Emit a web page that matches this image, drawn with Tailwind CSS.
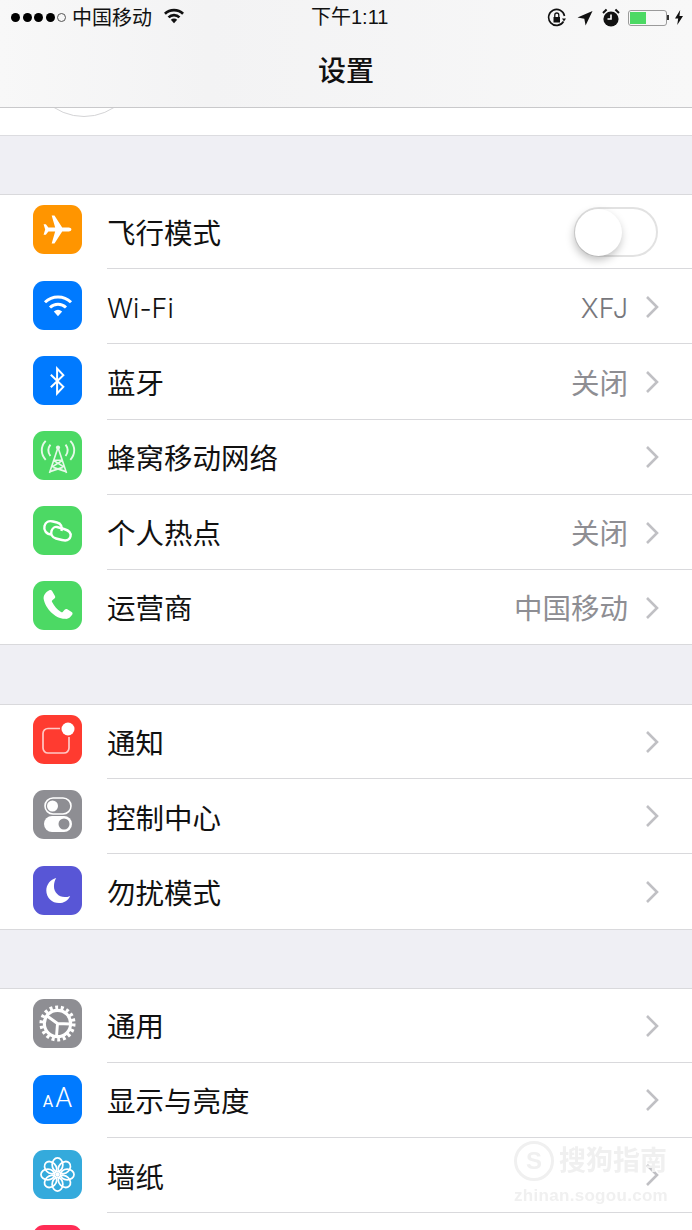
<!DOCTYPE html>
<html lang="zh">
<head>
  <meta charset="UTF-8" />
  <title>设置</title>
  <script src="https://cdn.jsdelivr.net/npm/@tailwindcss/browser@4"></script>
</head>
<body class="bg-[#efeff4]">
<div class="relative h-[1230px] w-[692px] overflow-hidden bg-[#efeff4] font-['Liberation_Sans','Noto_Sans_CJK_SC',sans-serif] text-[#111]">

  <!-- status + nav -->
  <header class="h-[108px] border-b border-[#c9c9cb] bg-gradient-to-r from-[#f8f8f8] via-[#f3f3f4] via-30% to-[#f8f8f8]">
    <div class="relative flex h-[35px] items-center pl-[11px] pr-[9px] text-[20px] leading-none">
      <div class="flex items-center gap-[2.5px]">
        <span class="h-[9px] w-[9px] rounded-full bg-black"></span>
        <span class="h-[9px] w-[9px] rounded-full bg-black"></span>
        <span class="h-[9px] w-[9px] rounded-full bg-black"></span>
        <span class="h-[9px] w-[9px] rounded-full bg-black"></span>
        <span class="h-[9px] w-[9px] rounded-full border border-[#555]"></span>
      </div>
      <span class="ml-[6px]">中国移动</span>
      <svg class="ml-[12px] mb-[3px]" width="20" height="16" viewBox="0 0 22 17" fill="none" stroke="#111" stroke-width="3">
        <path d="M1 6a14.5 14.5 0 0 1 20 0" />
        <path d="M5 10a8.6 8.6 0 0 1 12 0" />
        <path d="M7.5 12.6 11 16.500l3.500-3.900a5 5 0 0 0-7 0z" fill="#111" stroke="none" />
      </svg>
      <span class="absolute left-[311px] top-[7px] text-[20px]">下午1:11</span>
      <div class="ml-auto flex items-center">
        <svg width="20" height="20" viewBox="0 0 20 20" fill="none" stroke="#111" stroke-width="1.6">
          <path d="M16.500 13.500A8 8 0 1 1 17.500 8" />
          <path d="M15 10.500h4l-2 3z" fill="#111" stroke="none" />
          <rect x="6.500" y="9" width="6.500" height="5.500" fill="#111" stroke="none" />
          <path d="M7.800 9V7a2 2 0 0 1 4 0v2" stroke-width="1.3" />
        </svg>
        <svg class="ml-[10px]" width="16" height="16" viewBox="0 0 16 16"><path d="M15.500 1 .5 7.400l6.800 1.300L8.600 15.500z" fill="#111" /></svg>
        <svg class="ml-[9px]" width="18" height="19" viewBox="0 0 18 19">
          <circle cx="9" cy="11" r="7.600" fill="#111" />
          <path d="M9 6.500V11H5.500" fill="none" stroke="#fff" stroke-width="1.6" />
          <path d="M1 5 4.600 1.600M17 5l-3.600-3.400" stroke="#111" stroke-width="2" />
        </svg>
        <div class="ml-[8px] h-[16px] w-[39px] rounded-[3px] border border-[#9a9a9a] p-px">
          <div class="h-full w-[16px] bg-[#4cd964]"></div>
        </div>
        <div class="h-[5px] w-[2px] bg-[#333]"></div>
        <svg class="ml-[6px]" width="8" height="15" viewBox="0 0 10 17" preserveAspectRatio="none"><path d="M6.500 0 0 9.500h4L2.800 17 10 6.800H5.600z" fill="#111" /></svg>
      </div>
    </div>
    <h1 class="mt-[18px] text-center text-[28px] font-medium leading-[38px]">设置</h1>
  </header>

  <div class="relative h-[28px] overflow-hidden border-b border-[#dcdce0] bg-white">
    <div class="absolute left-[29px] top-[-101px] h-[110px] w-[110px] rounded-full border border-[#d4d4d6]"></div>
  </div>

  <div class="h-[58px]"></div>

  <section class="border-y border-[#d9d9dc] bg-white">
    <div class="flex h-[74px] items-center pl-[33px]">
      <div class="mb-[5px] flex h-[49px] w-[49px] shrink-0 items-center justify-center rounded-[11px] bg-[#ff9500]">
        <svg width="33" height="33" viewBox="0 0 38 38"><path d="M35 19c0-1.400-1.600-2.200-3-2.200h-7.600L15.500 3h-3.200l4 13.800H8.500L5.600 13H3l1.800 6L3 25h2.600l2.900-3.800h7.800l-4 13.800h3.200l8.900-13.800H32c1.400 0 3-.8 3-2.200z" fill="#fff" /></svg>
      </div>
      <div class="ml-[25px] flex h-full min-w-0 flex-1 items-center border-b border-[#d9d9dc] pr-[34px] text-[28.5px]">
        <span class="pt-[5px]">飞行模式</span>
        <div class="relative ml-auto h-[50px] w-[84px] rounded-full border-2 border-[#e2e2e2]">
          <div class="absolute left-[-1px] top-0 h-[47px] w-[47px] rounded-full bg-white shadow-[-1px_4px_9px_rgba(0,0,0,0.25)]"></div>
        </div>
      </div>
    </div>
    <div class="flex h-[75px] items-center pl-[33px]">
      <div class="mb-[2px] flex h-[49px] w-[49px] shrink-0 items-center justify-center rounded-[11px] bg-[#007aff]">
        <svg width="32" height="26" viewBox="0 0 34 28" fill="none" stroke="#fff" stroke-width="3.2">
          <path d="M3 10a20 20 0 0 1 28 0" />
          <path d="M8.400 15.600a12.400 12.400 0 0 1 17.200 0" />
          <path d="M12.500 20 17 25l4.500-5a7 7 0 0 0-9 0z" fill="#fff" stroke="none" />
        </svg>
      </div>
      <div class="ml-[25px] flex h-full min-w-0 flex-1 items-center border-b border-[#d9d9dc] pr-[33px] text-[28.5px]">
        <span class="pt-[6px] font-['Inter'] text-[27px] font-light">Wi-Fi</span>
        <span class="ml-auto pt-[6px] font-['Inter'] text-[27px] font-light text-[#77777c]">XFJ</span>
        <svg class="ml-[17px] mt-px" width="14" height="24" viewBox="0 0 14 24" fill="none" stroke="#c0c0c4" stroke-width="2.6"><path d="m2 2 10 10L2 22" /></svg>
      </div>
    </div>
    <div class="flex h-[76px] items-center pl-[33px]">
      <div class="mb-[3px] flex h-[49px] w-[49px] shrink-0 items-center justify-center rounded-[11px] bg-[#007aff]">
        <svg width="19" height="30" viewBox="0 0 22 36" fill="none" stroke="#fff" stroke-width="2.4"><path d="M3 10.500 18 25 10.500 33V3L18 11 3 25.500" /></svg>
      </div>
      <div class="ml-[25px] flex h-full min-w-0 flex-1 items-center border-b border-[#d9d9dc] pr-[33px] text-[28.5px]">
        <span class="pt-[5px]">蓝牙</span>
        <span class="ml-auto pt-[5px] text-[#8e8e93]">关闭</span>
        <svg class="ml-[17px]" width="14" height="24" viewBox="0 0 14 24" fill="none" stroke="#c0c0c4" stroke-width="2.6"><path d="m2 2 10 10L2 22" /></svg>
      </div>
    </div>
    <div class="flex h-[75px] items-center pl-[33px]">
      <div class="mb-[4px] flex h-[49px] w-[49px] shrink-0 items-center justify-center rounded-[11px] bg-[#4cd964]">
        <svg width="38" height="36" viewBox="0 0 40 38" fill="none" stroke="#e6f9e9" stroke-width="2">
          <path d="M7 3C1.500 9 1.500 17 7 23M33 3c5.500 6 5.500 14 0 20" />
          <path d="M12 7c-3 4-3 8 0 12M28 7c3 4 3 8 0 12" />
          <circle cx="20" cy="10" r="2.200" fill="#e6f9e9" stroke="none" />
          <path d="M20 10 11 37M20 10l9 27M15.500 23.500h9M13 31l12-7.500M27 31l-12-7.500M11.500 35.500 25 31M28.500 35.500 15 31" stroke-width="1.700" />
        </svg>
      </div>
      <div class="ml-[25px] flex h-full min-w-0 flex-1 items-center border-b border-[#d9d9dc] pr-[33px] text-[28.5px]">
        <span class="pt-[5px]">蜂窝移动网络</span>
        <svg class="ml-auto" width="14" height="24" viewBox="0 0 14 24" fill="none" stroke="#c0c0c4" stroke-width="2.6"><path d="m2 2 10 10L2 22" /></svg>
      </div>
    </div>
    <div class="flex h-[75px] items-center pl-[33px]">
      <div class="relative mb-[4px] h-[49px] w-[49px] shrink-0 rounded-[11px] bg-[#4cd964]">
        <svg class="absolute left-0 top-0" width="49" height="49" viewBox="0 0 49 49" fill="none" stroke="#fff" stroke-width="2.4">
          <path d="M19 28.500C13 28.500 10.500 24 11.500 20 12.500 16 16 14.500 20 15.500L24 16.500C28 17.500 29.500 21 28.500 25" />
          <path d="M24 21 31 23C36 24.500 38.500 27 37.500 30.500 36.500 34 33 35 29 34L23 32.500C19 31.500 17.500 28 18.500 25 19.500 22 22 20.500 24 21" />
        </svg>
      </div>
      <div class="ml-[25px] flex h-full min-w-0 flex-1 items-center border-b border-[#d9d9dc] pr-[33px] text-[28.5px]">
        <span class="pt-[5px]">个人热点</span>
        <span class="ml-auto pt-[5px] text-[#8e8e93]">关闭</span>
        <svg class="ml-[17px] mt-px" width="14" height="24" viewBox="0 0 14 24" fill="none" stroke="#c0c0c4" stroke-width="2.6"><path d="m2 2 10 10L2 22" /></svg>
      </div>
    </div>
    <div class="flex h-[74px] items-center pl-[33px]">
      <div class="mb-[3px] flex h-[49px] w-[49px] shrink-0 items-center justify-center rounded-[11px] bg-[#4cd964]">
        <svg width="32" height="33" viewBox="0 0 36 38"><path d="M8 1.500c1.500-.8 2.500-.3 3.200.8l3.300 5.700c.6 1.200.3 2.200-.6 3l-2.400 2c-.7.600-.7 1.200-.3 2 2.700 5 5.700 8.500 10.300 11.500.8.500 1.500.4 2.100-.3l2-2.300c.9-1 2-1.200 3.100-.5l5 3.200c1.200.8 1.400 1.900.6 3.100-2 3-4.800 5.300-8.300 4.600C14 34 3.500 22 1.500 11.500.9 7.500 4 3.500 8 1.500z" fill="#fff" /></svg>
      </div>
      <div class="ml-[25px] flex h-full min-w-0 flex-1 items-center pr-[33px] text-[28.5px]">
        <span class="pt-[5px]">运营商</span>
        <span class="ml-auto pt-[5px] text-[#8e8e93]">中国移动</span>
        <svg class="ml-[17px] mt-px" width="14" height="24" viewBox="0 0 14 24" fill="none" stroke="#c0c0c4" stroke-width="2.6"><path d="m2 2 10 10L2 22" /></svg>
      </div>
    </div>
  </section>

  <div class="h-[59px]"></div>

  <section class="border-y border-[#d9d9dc] bg-white">
    <div class="flex h-[74px] items-center pl-[33px]">
      <div class="relative mb-[5px] h-[49px] w-[49px] shrink-0 rounded-[11px] bg-[#ff3b30]">
        <svg class="absolute left-0 top-0" width="49" height="49" viewBox="0 0 49 49" fill="none">
          <path d="M27 13.500H15a5 5 0 0 0-5 5V33a5 5 0 0 0 5 5h16a5 5 0 0 0 5-5V22" stroke="#ffc9c5" stroke-width="1.700" />
          <circle cx="35" cy="14" r="6.500" fill="#fff" />
        </svg>
      </div>
      <div class="ml-[25px] flex h-full min-w-0 flex-1 items-center border-b border-[#d9d9dc] pr-[33px] text-[28.5px]">
        <span class="pt-[5px]">通知</span>
        <svg class="ml-auto" width="14" height="24" viewBox="0 0 14 24" fill="none" stroke="#c0c0c4" stroke-width="2.6"><path d="m2 2 10 10L2 22" /></svg>
      </div>
    </div>
    <div class="flex h-[75px] items-center pl-[33px]">
      <div class="mb-[4px] flex h-[49px] w-[49px] shrink-0 items-center justify-center rounded-[11px] bg-[#8e8e93]">
        <svg width="30" height="36" viewBox="0 0 30 36">
          <rect x="2" y="1" width="26" height="16" rx="8" fill="none" stroke="#fff" stroke-width="1.600" />
          <circle cx="9.500" cy="9" r="5.500" fill="#fff" />
          <rect x="1" y="19" width="28" height="16" rx="8" fill="#fff" />
          <circle cx="21" cy="27" r="5.500" fill="#8e8e93" />
        </svg>
      </div>
      <div class="ml-[25px] flex h-full min-w-0 flex-1 items-center border-b border-[#d9d9dc] pr-[33px] text-[28.5px]">
        <span class="pt-[6px]">控制中心</span>
        <svg class="ml-auto" width="14" height="24" viewBox="0 0 14 24" fill="none" stroke="#c0c0c4" stroke-width="2.6"><path d="m2 2 10 10L2 22" /></svg>
      </div>
    </div>
    <div class="flex h-[75px] items-center pl-[33px]">
      <div class="mb-[2px] flex h-[49px] w-[49px] shrink-0 items-center justify-center rounded-[11px] bg-[#5856d6]">
        <svg width="26" height="27" viewBox="0 0 28 30"><path d="M12 1C5.500 2.500 1 8.500 1 15c0 8 6.500 14 14 14 5.500 0 10.500-3 12.500-8-2 1-4 1.200-6 1.200-7 0-12-5.500-12-12 0-3.500 1-7 2.500-9.200z" fill="#fff" /></svg>
      </div>
      <div class="ml-[25px] flex h-full min-w-0 flex-1 items-center pr-[33px] text-[28.5px]">
        <span class="pt-[5px]">勿扰模式</span>
        <svg class="ml-auto" width="14" height="24" viewBox="0 0 14 24" fill="none" stroke="#c0c0c4" stroke-width="2.6"><path d="m2 2 10 10L2 22" /></svg>
      </div>
    </div>
  </section>

  <div class="h-[58px]"></div>

  <section class="border-t border-[#d9d9dc] bg-white">
    <div class="flex h-[74px] items-center pl-[33px]">
      <div class="mb-[5px] flex h-[49px] w-[49px] shrink-0 items-center justify-center rounded-[11px] bg-[#8e8e93]">
        <svg width="39" height="39" viewBox="0 0 40 40" fill="none" stroke="#fff">
          <circle cx="20" cy="20" r="16.500" stroke-width="4" stroke-dasharray="3 2.760" />
          <circle cx="20" cy="20" r="13.500" stroke-width="3.200" />
          <path d="M20 20 9 12M20 20 33 20.500M20 20 19 33" stroke-width="3" />
        </svg>
      </div>
      <div class="ml-[25px] flex h-full min-w-0 flex-1 items-center border-b border-[#d9d9dc] pr-[33px] text-[28.5px]">
        <span class="pt-[4px]">通用</span>
        <svg class="ml-auto" width="14" height="24" viewBox="0 0 14 24" fill="none" stroke="#c0c0c4" stroke-width="2.6"><path d="m2 2 10 10L2 22" /></svg>
      </div>
    </div>
    <div class="flex h-[75px] items-center pl-[33px]">
      <div class="mb-[3px] flex h-[49px] w-[49px] shrink-0 items-baseline justify-center gap-[2px] rounded-[11px] bg-[#007aff] pt-[10px] font-['Roboto'] leading-none text-white">
        <span class="text-[16px]">A</span><span class="text-[27px] font-light">A</span>
      </div>
      <div class="ml-[25px] flex h-full min-w-0 flex-1 items-center border-b border-[#d9d9dc] pr-[33px] text-[28.5px]">
        <span class="pt-[5px]">显示与亮度</span>
        <svg class="ml-auto" width="14" height="24" viewBox="0 0 14 24" fill="none" stroke="#c0c0c4" stroke-width="2.6"><path d="m2 2 10 10L2 22" /></svg>
      </div>
    </div>
    <div class="flex h-[75px] items-center pl-[33px]">
      <div class="mb-[2px] flex h-[49px] w-[49px] shrink-0 items-center justify-center rounded-[11px] bg-[#34aadc]">
        <svg width="35" height="35" viewBox="0 0 36 36" fill="none" stroke="#fff" stroke-width="1.800">
          <circle cx="18" cy="18" r="2.200" fill="#fff" stroke="none" />
          <ellipse cx="18" cy="8" rx="5.500" ry="7" />
          <ellipse cx="18" cy="28" rx="5.500" ry="7" />
          <ellipse cx="8" cy="18" rx="7" ry="5.500" />
          <ellipse cx="28" cy="18" rx="7" ry="5.500" />
          <ellipse cx="18" cy="8" rx="5.500" ry="7" transform="rotate(45 18 18)" />
          <ellipse cx="18" cy="28" rx="5.500" ry="7" transform="rotate(45 18 18)" />
          <ellipse cx="8" cy="18" rx="7" ry="5.500" transform="rotate(45 18 18)" />
          <ellipse cx="28" cy="18" rx="7" ry="5.500" transform="rotate(45 18 18)" />
        </svg>
      </div>
      <div class="ml-[25px] flex h-full min-w-0 flex-1 items-center border-b border-[#d9d9dc] pr-[33px] text-[28.5px]">
        <span class="pt-[6px]">墙纸</span>
        <svg class="ml-auto" width="14" height="24" viewBox="0 0 14 24" fill="none" stroke="#c0c0c4" stroke-width="2.6"><path d="m2 2 10 10L2 22" /></svg>
      </div>
    </div>
    <div class="flex h-[75px] items-start pl-[33px] pt-[12px]">
      <div class="h-[49px] w-[49px] shrink-0 rounded-[11px] bg-[#ff2d55]"></div>
    </div>
  </section>

  <!-- watermark -->
  <div class="absolute left-[514px] top-[1141px] blur-[0.6px]">
    <div class="flex items-center gap-[5px]">
      <div class="flex h-[40px] w-[40px] items-center justify-center rounded-full border-[3px] border-[#f0f0f0] text-[24px] font-bold leading-none text-[#f0f0f0]">S</div>
      <span class="text-[27px] font-bold leading-none text-[#f0f0f0]">搜狗指南</span>
    </div>
    <div class="mt-[6px] text-[17px] font-bold leading-none tracking-[0.3px] text-[#f0f0f0]">zhinan.sogou.com</div>
  </div>
</div>
</body>
</html>
